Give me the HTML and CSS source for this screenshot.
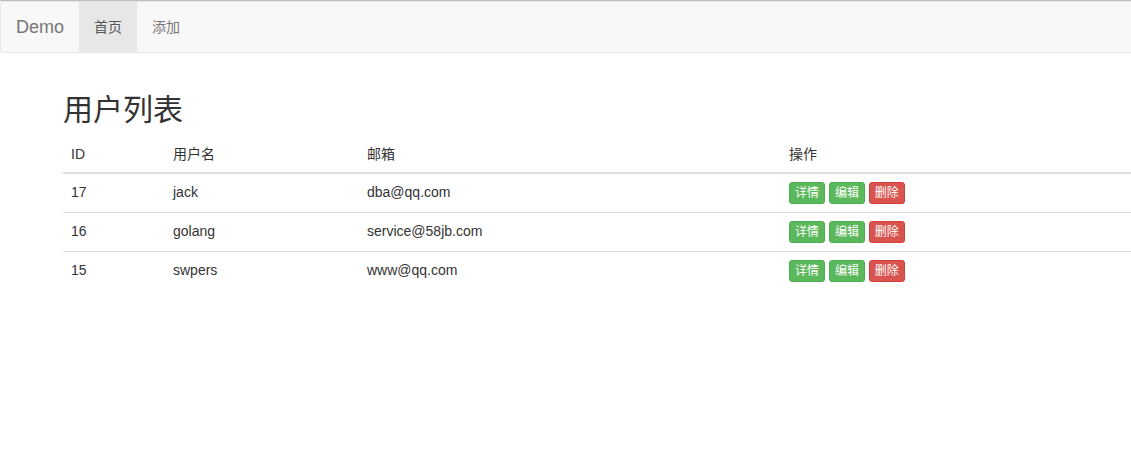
FILE: index.html
```html
<!DOCTYPE html>
<html lang="zh-CN">
<head>
<meta charset="utf-8">
<title>Demo</title>
<link rel="stylesheet" href="styles.css">
</head>
<body>
<div class="topline"></div>
<nav class="navbar">
  <a class="brand" href="#">Demo</a>
  <ul class="nav">
    <li class="active"><a href="#">首页</a></li>
    <li><a href="#">添加</a></li>
  </ul>
</nav>
<div class="container">
  <h2 class="title">用户列表</h2>
  <table class="table">
    <thead>
      <tr><th class="c-id">ID</th><th class="c-name">用户名</th><th class="c-mail">邮箱</th><th>操作</th></tr>
    </thead>
    <tbody>
      <tr><td>17</td><td>jack</td><td>dba@qq.com</td><td><a class="btn btn-success">详情</a> <a class="btn btn-success">编辑</a> <a class="btn btn-danger">删除</a></td></tr>
      <tr><td>16</td><td>golang</td><td>service@58jb.com</td><td><a class="btn btn-success">详情</a> <a class="btn btn-success">编辑</a> <a class="btn btn-danger">删除</a></td></tr>
      <tr><td>15</td><td>swpers</td><td>www@qq.com</td><td><a class="btn btn-success">详情</a> <a class="btn btn-success">编辑</a> <a class="btn btn-danger">删除</a></td></tr>
    </tbody>
  </table>
</div>
</body>
</html>
```
FILE: styles.css
```css
* { box-sizing: border-box; }
html, body { margin: 0; padding: 0; }
body {
  font-family: "Liberation Sans", Arial, "Noto Sans CJK SC", sans-serif;
  font-size: 14px;
  line-height: 1.42857;
  color: #333;
  background: #fff;
  overflow-x: hidden;
}
.topline { height: 1px; background: #bdbdbd; }
.navbar {
  display: flex;
  height: 52px;
  background: #f8f8f8;
  border: 1px solid #e7e7e7;
  border-right: 0;
  border-radius: 4px 0 0 4px;
  margin-bottom: 20px;
}
.brand {
  display: block;
  height: 50px;
  padding: 15px;
  font-size: 18px;
  line-height: 20px;
  color: #777;
  text-decoration: none;
}
.nav { display: flex; list-style: none; margin: 0; padding: 0; }
.nav a {
  display: block;
  padding: 15px;
  line-height: 20px;
  color: #777;
  text-decoration: none;
}
.nav .active a { background: #e7e7e7; color: #555; }
.container { padding: 0 0 0 63px; display: flow-root; }
.title {
  margin: 20px 0 10px;
  font-size: 30px;
  font-weight: 400;
  line-height: 1.1;
  color: #333;
}
.table { width: 100%; border-collapse: collapse; border-spacing: 0; }
.table th, .table td {
  padding: 8px;
  line-height: 20px;
  text-align: left;
  vertical-align: top;
  border-top: 1px solid #ddd;
}
.table th {
  font-weight: 400;
  vertical-align: bottom;
  border-top: 0;
  border-bottom: 2px solid #ddd;
}
.c-id { width: 102px; }
.c-name { width: 194px; }
.c-mail { width: 422px; }
.btn {
  display: inline-block;
  padding: 1px 5px;
  font-size: 12px;
  line-height: 18px;
  border: 1px solid transparent;
  border-radius: 3px;
  color: #fff;
  text-decoration: none;
  vertical-align: top;
}
.btn-success { background: #5cb85c; border-color: #4cae4c; }
.btn-danger { background: #d9534f; border-color: #d43f3a; }
```
